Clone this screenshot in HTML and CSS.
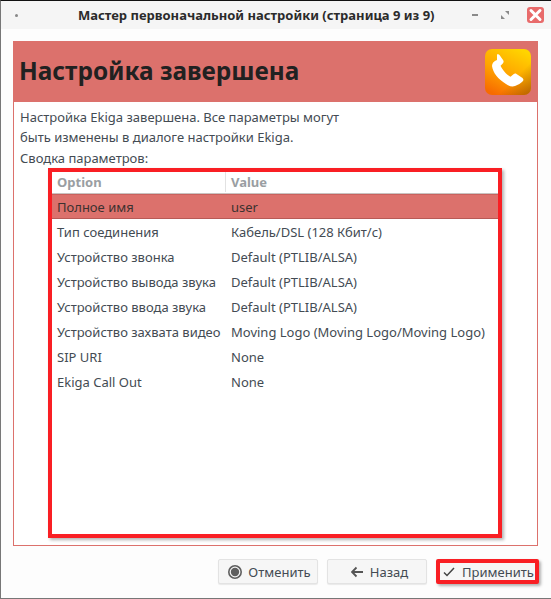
FILE: index.html
```html
<!DOCTYPE html>
<html lang="ru">
<head>
    <meta charset="UTF-8">
    <meta name="viewport" content="width=device-width, initial-scale=1.0">
    <title>Мастер первоначальной настройки</title>
    <link rel="stylesheet" href="styles.css">
</head>
<body>
    <div class="window">
        <div class="titlebar">
            <span class="menu-dot"></span>
            <span class="title">Мастер первоначальной настройки (страница 9 из 9)</span>
            <div class="win-buttons">
                <span class="win-min"></span>
                <svg class="win-max" width="8" height="8" viewBox="0 0 8 8">
                    <path d="M4 0h4v4zM0 4l4 4H0z" fill="#8a8a8a"/>
                </svg>
                <span class="win-close">
                    <svg width="17" height="16" viewBox="0 0 17 16">
                        <path d="M4 3.500l9 9M13 3.500l-9 9" stroke="#fff" stroke-width="3" stroke-linecap="round"/>
                    </svg>
                </span>
            </div>
        </div>

        <div class="content">
            <div class="panel">
                <div class="banner">
                    <h1>Настройка завершена</h1>
                    <svg class="logo" width="46" height="46" viewBox="0 0 46 46">
                        <defs>
                            <linearGradient id="logo-bg" x1="0.75" y1="0" x2="0.25" y2="1">
                                <stop offset="0" stop-color="#ffd400"/>
                                <stop offset="0.55" stop-color="#ffa400"/>
                                <stop offset="1" stop-color="#f76b00"/>
                            </linearGradient>
                            <linearGradient id="logo-shade" x1="0.4" y1="0.4" x2="1" y2="1">
                                <stop offset="0.4" stop-color="#7a3c00" stop-opacity="0"/>
                                <stop offset="1" stop-color="#7a3c00" stop-opacity="0.55"/>
                            </linearGradient>
                        </defs>
                        <rect width="46" height="46" rx="7" fill="url(#logo-bg)"/>
                        <rect width="46" height="46" rx="7" fill="url(#logo-shade)"/>
                        <path d="M12 11c-3 1-5 3-5 6c1 7 6 13 14 18c3 2 6 3 9 2c3-1 6-3 8-5c.7-1 .5-2-.5-3l-6-4c-1-.7-2-.6-3 .2l-3 2.500c-4-2-8-7-10-11l2.500-2.500c.8-1 .8-2 .2-3l-3.500-5c-.7-1-1.700-1.200-2.700-.7z" fill="#fff"/>
                    </svg>
                </div>

                <div class="panel-body">
                    <p class="intro">Настройка Ekiga завершена. Все параметры могут<br>быть изменены в диалоге настройки Ekiga.</p>
                    <p class="summary">Сводка параметров:</p>

                    <div class="tree">
                        <div class="tree-head">
                            <div class="col-option">Option</div>
                            <div class="col-value">Value</div>
                        </div>
                        <div class="row selected"><div class="col-option">Полное имя</div><div class="col-value">user</div></div>
                        <div class="row"><div class="col-option">Тип соединения</div><div class="col-value">Кабель/DSL (128 Кбит/с)</div></div>
                        <div class="row"><div class="col-option">Устройство звонка</div><div class="col-value">Default (PTLIB/ALSA)</div></div>
                        <div class="row"><div class="col-option">Устройство вывода звука</div><div class="col-value">Default (PTLIB/ALSA)</div></div>
                        <div class="row"><div class="col-option">Устройство ввода звука</div><div class="col-value">Default (PTLIB/ALSA)</div></div>
                        <div class="row"><div class="col-option">Устройство захвата видео</div><div class="col-value">Moving Logo (Moving Logo/Moving Logo)</div></div>
                        <div class="row"><div class="col-option">SIP URI</div><div class="col-value">None</div></div>
                        <div class="row"><div class="col-option">Ekiga Call Out</div><div class="col-value">None</div></div>
                    </div>
                </div>
            </div>

            <div class="actions">
                <button class="btn btn-cancel">
                    <svg width="16" height="16" viewBox="0 0 16 16">
                        <circle cx="8" cy="8" r="6.200" fill="none" stroke="#5f5f5f" stroke-width="1.600"/>
                        <circle cx="8" cy="8" r="4.200" fill="#5f5f5f"/>
                    </svg>
                    Отменить
                </button>
                <button class="btn btn-back">
                    <svg width="12" height="12" viewBox="0 0 12 12">
                        <path d="M5.500 1.500L1 6l4.500 4.500M1.500 6H12" fill="none" stroke="#555" stroke-width="1.800"/>
                    </svg>
                    Назад
                </button>
                <button class="btn btn-apply">
                    <svg width="12" height="12" viewBox="0 0 12 12">
                        <path d="M1 6.500l3 3l7-7.500" fill="none" stroke="#444" stroke-width="1.500"/>
                    </svg>
                    Применить
                </button>
            </div>
        </div>
    </div>
</body>
</html>
```

FILE: styles.css
```css
* {
    padding: 0;
    margin: 0;
    box-sizing: border-box;
}

body {
    width: 551px;
    height: 599px;
    overflow: hidden;
    background: #fff;
    font-family: 'Noto Sans', sans-serif;
    font-size: 13px;
    color: #434b53;
}

.window {
    height: 599px;
    display: flex;
    flex-direction: column;
    background: #fdfdfd;
    border-top: 1px solid #111;
    border-left: 1px solid #777;
    border-bottom: 1px solid #777;
}

.titlebar {
    height: 28px;
    flex-shrink: 0;
    display: flex;
    align-items: center;
    background: #f5f5f5;
    padding-left: 14px;
}

.menu-dot {
    width: 3px;
    height: 3px;
    border-radius: 50%;
    background: #888;
}

.title {
    margin-left: 60px;
    font-size: 13px;
    font-weight: 700;
    color: #2b2b2b;
    white-space: nowrap;
}

.win-buttons {
    margin-left: auto;
    display: flex;
    align-items: center;
}

.win-min {
    width: 6px;
    height: 2px;
    background: #8a8a8a;
    margin-right: 23px;
}

.win-max {
    margin-right: 18px;
}

.win-close {
    width: 17px;
    height: 16px;
    border-radius: 3px;
    background: #e86b6b;
    margin-right: 7px;
    display: flex;
}

.content {
    flex: 1;
    padding: 12px 12px 0;
    display: flex;
    flex-direction: column;
}

.panel {
    height: 505px;
    margin-right: 1px;
    border: 1px solid #dc716c;
    background: #fff;
}

.banner {
    height: 61px;
    margin: -1px -1px 0;
    background: #dc716c;
    display: flex;
    align-items: center;
    justify-content: space-between;
    padding: 0 7px 0 6px;
}

h1 {
    font-size: 24.4px;
    font-weight: 700;
    color: #212121;
    margin-bottom: 2px;
}

.panel-body {
    padding: 5px 0 0 6px;
}

.intro {
    line-height: 20px;
}

.summary {
    line-height: 20px;
    margin-top: 1px;
}

.tree {
    width: 454px;
    height: 370px;
    margin-left: 28px;
    border: 4px solid #f91f24;
    box-shadow: 2px 2px 3px rgba(0, 0, 0, 0.3);
    background: #fff;
}

.tree-head {
    display: flex;
    height: 22px;
    align-items: center;
    padding-bottom: 1px;
    font-weight: 700;
    color: #9a9ea2;
    border-bottom: 1px solid #c9c2c0;
}

.tree-head .col-value {
    border-left: 1px solid #e2e2e2;
    padding-left: 5px;
    height: 100%;
    display: flex;
    align-items: center;
}

.row {
    display: flex;
    height: 25px;
    align-items: center;
    white-space: nowrap;
}

.selected {
    background: #dc716c;
    border-top: 1px solid #c9625e;
    border-bottom: 1px solid #b85a56;
    color: #3c3230;
}

.col-option {
    width: 173px;
    padding-left: 5px;
    flex-shrink: 0;
}

.col-value {
    padding-left: 6px;
}

.actions {
    display: flex;
    justify-content: flex-end;
    align-items: center;
    gap: 9px;
    margin-top: 13px;
}

.btn {
    height: 25px;
    display: flex;
    align-items: center;
    justify-content: center;
    gap: 5px;
    font-family: inherit;
    font-size: 13px;
    color: #434b53;
    background: #f6f6f6;
    border: 1px solid #e3e3e3;
    border-radius: 2px;
    box-shadow: 0 1px 1px rgba(0, 0, 0, 0.08);
}

.btn-cancel,
.btn-back {
    width: 100px;
}

.btn-cancel {
    padding-left: 2px;
}

.btn-back {
    gap: 7px;
    padding-left: 5px;
}

.btn-apply {
    width: 103px;
    gap: 7px;
    padding-left: 2px;
    border: 4px solid #f91f24;
    box-shadow: 2px 2px 3px rgba(0, 0, 0, 0.3);
}
```
